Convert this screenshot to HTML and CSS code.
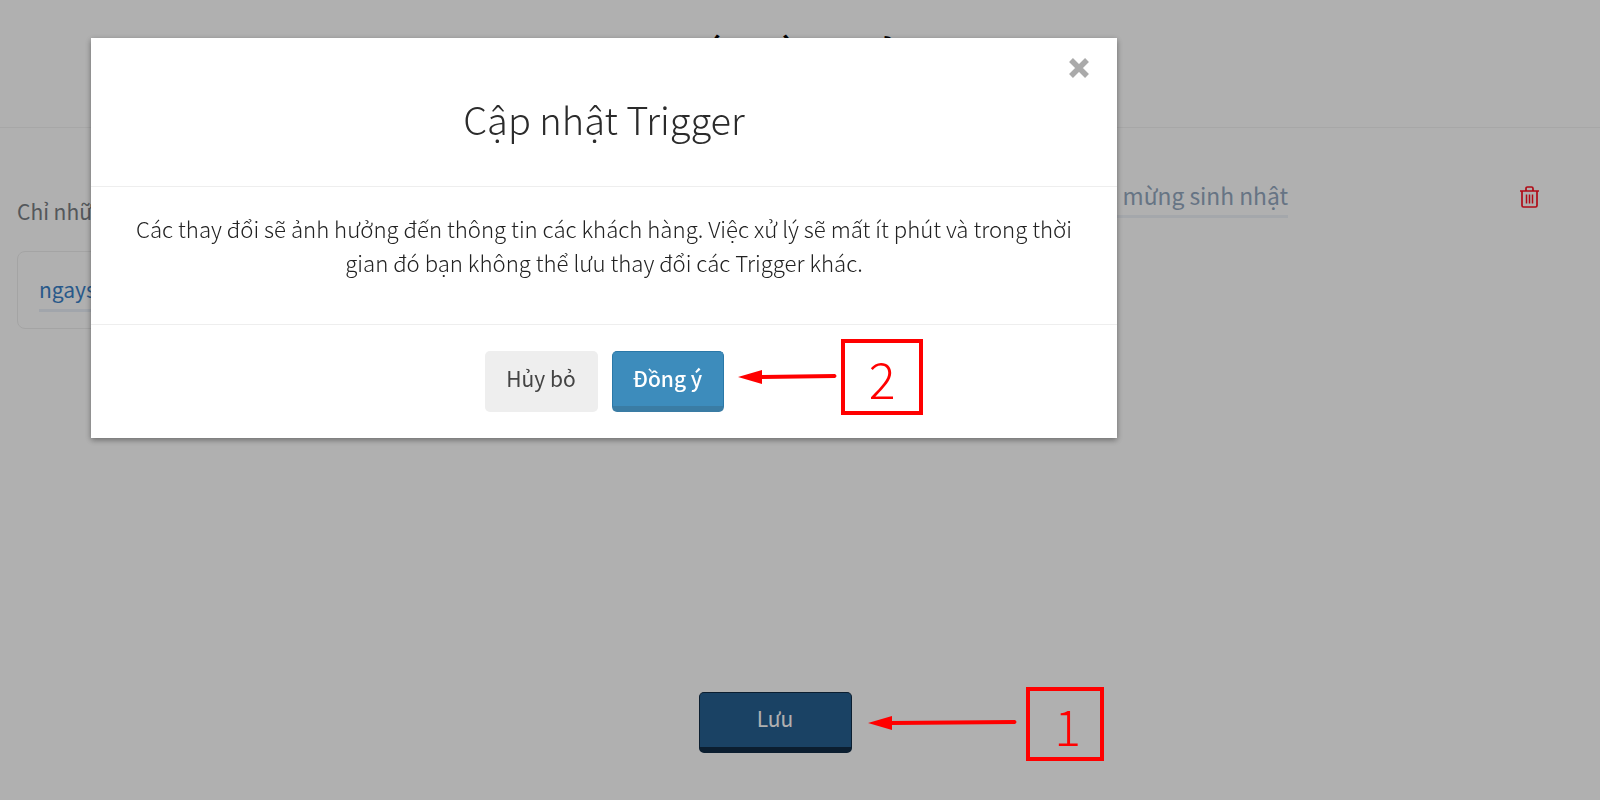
FILE: index.html
```html
<!DOCTYPE html>
<html lang="vi">
<head>
    <meta charset="UTF-8">
    <meta name="viewport" content="width=device-width, initial-scale=1.0">
    <title>Cập nhật Trigger</title>
    <link rel="stylesheet" href="styles.css">
</head>
<body>

<header class="page-header">
    <h1 class="page-title">Trigger nếu cần gửi lại ngay</h1>
</header>

<main class="trigger-form">
    <div class="form-row">
        <div class="form-left">
            <p class="form-label">Chỉ những khách hàng</p>
            <div class="tag-box">
                <span class="tag-text">ngaysinh</span>
            </div>
        </div>
        <div class="form-right">
            <span class="trigger-name">Chúc mừng sinh nhật</span>
            <svg class="trash-icon" viewBox="0 0 21 22" width="21" height="22" fill="none" stroke="#ff1020" stroke-width="1.7">
                <path d="M1 5h19M7 5V2.600Q7 1 8.500 1h4Q14 1 14 2.600V5M3 5v14.500Q3 21 4.500 21h12q1.500 0 1.500-1.500V5"/>
                <path d="M7.500 8.500v9M10.500 8.500v9M13.500 8.500v9" stroke-width="1.500"/>
            </svg>
        </div>
    </div>
    <div class="save-row">
        <button class="btn-save">Lưu</button>
    </div>
</main>

<div class="overlay"></div>

<div class="modal">
    <div class="modal-head">
        <svg class="modal-close" viewBox="0 0 20 20" width="20" height="20" stroke="#aaa" stroke-width="5.500">
            <path d="M2 2L18 18M18 2L2 18"/>
        </svg>
        <h2 class="modal-title">Cập nhật Trigger</h2>
    </div>
    <div class="modal-body">
        Các thay đổi sẽ ảnh hưởng đến thông tin các khách hàng. Việc xử lý sẽ mất ít phút và trong thời gian đó bạn không thể lưu thay đổi các Trigger khác.
    </div>
    <div class="modal-foot">
        <button class="btn-cancel">Hủy bỏ</button>
        <button class="btn-ok">Đồng ý</button>
    </div>
</div>

<!-- annotations on top of the screenshot -->
<div class="note-box note-one">1</div>
<div class="note-box note-two">2</div>
<svg class="note-arrow arrow-one" width="150" height="16" viewBox="0 0 150 16">
    <path d="M0 9L24 2V7L147 6Q150 8 147 10L24 11V16Z" fill="#f00"/>
</svg>
<svg class="note-arrow arrow-two" width="100" height="16" viewBox="0 0 100 16">
    <path d="M0 8L24 1V6L97 5Q100 7 97 9L24 10V15Z" fill="#f00"/>
</svg>

</body>
</html>
```

FILE: styles.css
```css
* {
    box-sizing: border-box;
}
body {
    margin: 0;
    height: 800px;
    overflow: hidden;
    background-color: #fff;
    font-family: "Noto Sans CJK SC", "Noto Sans", sans-serif;
    color: #333;
}
.page-header {
    height: 128px;
    border-bottom: 1px solid #f2f2f2;
    padding-top: 30px;
}
.page-title {
    margin: 0;
    text-align: center;
    font-size: 44px;
    line-height: 50px;
    font-weight: 500;
    word-spacing: 4px;
    color: #000;
}
.form-row {
    display: flex;
    justify-content: space-between;
    padding: 54px 60px 0 17px;
}
.form-label {
    margin: 14px 0 25px;
    font-size: 21px;
    line-height: 30px;
    color: #7a7f85;
}
.tag-box {
    width: 500px;
    height: 78px;
    padding: 25px 21px;
    border: 1px solid #eee;
    border-radius: 8px;
}
.tag-text {
    display: inline-block;
    width: 200px;
    font-size: 21px;
    line-height: 24px;
    padding-bottom: 8px;
    color: #3a82c8;
    border-bottom: 3px solid #eaf0f8;
}
.form-right {
    display: flex;
    align-items: flex-start;
    gap: 231px;
}
.trigger-name {
    font-size: 22.800px;
    line-height: 28px;
    padding-bottom: 5px;
    color: #94a8c0;
    border-bottom: 3px solid #eef2f8;
}
.trash-icon {
    margin-top: 4px;
}
.save-row {
    display: flex;
    justify-content: center;
    padding: 363px 50px 0 0;
}
.btn-save {
    width: 153px;
    height: 61px;
    padding: 0 0 4px;
    font-family: inherit;
    font-size: 21px;
    color: #fff;
    background-color: #276092;
    border: 1px solid #102c46;
    border-bottom-width: 6px;
    border-radius: 5px;
}
.overlay {
    position: fixed;
    inset: 0;
    background-color: rgba(0, 0, 0, 0.31);
}
.modal {
    position: fixed;
    top: 38px;
    left: 91px;
    width: 1026px;
    height: 400px;
    background-color: #fff;
    box-shadow: 0 2px 6px rgba(0, 0, 0, 0.4);
}
.modal-head {
    position: relative;
    height: 149px;
    padding-top: 51px;
    border-bottom: 1px solid #eee;
}
.modal-close {
    position: absolute;
    top: 20px;
    right: 28px;
}
.modal-title {
    margin: 0;
    text-align: center;
    font-size: 38px;
    line-height: 60px;
    font-weight: 300;
    color: #2b2b2b;
}
.modal-body {
    height: 138px;
    padding: 24px 40px 0;
    text-align: center;
    font-size: 22.200px;
    line-height: 34px;
    font-weight: 300;
    color: #222;
    border-bottom: 1px solid #eee;
}
.modal-foot {
    display: flex;
    justify-content: center;
    gap: 14px;
    padding: 26px 0 0 0;
}
.btn-cancel, .btn-ok {
    height: 61px;
    font-family: inherit;
    font-size: 21px;
    border-radius: 5px;
}
.btn-cancel {
    width: 113px;
    padding: 0 0 7px;
    color: #444;
    background-color: #eee;
    border: none;
}
.btn-ok {
    width: 112px;
    padding: 0 0 3px;
    font-weight: 500;
    color: #fff;
    background-color: #3d8cbc;
    border: 1px solid #2a78a8;
    border-bottom: 6px solid #3a7ca4;
}
.note-box {
    position: absolute;
    display: flex;
    align-items: center;
    justify-content: center;
    font-size: 50px;
    font-weight: 300;
    color: #f00;
    background-color: #fff;
    border: 4px solid #f00;
}
.note-one {
    left: 1026px;
    top: 687px;
    width: 78px;
    height: 74px;
    padding-left: 5px;
    background-color: transparent;
}
.note-two {
    left: 841px;
    top: 339px;
    width: 82px;
    height: 76px;
}
.note-arrow {
    position: absolute;
}
.arrow-one {
    left: 868px;
    top: 714px;
}
.arrow-two {
    left: 738px;
    top: 369px;
}
```
